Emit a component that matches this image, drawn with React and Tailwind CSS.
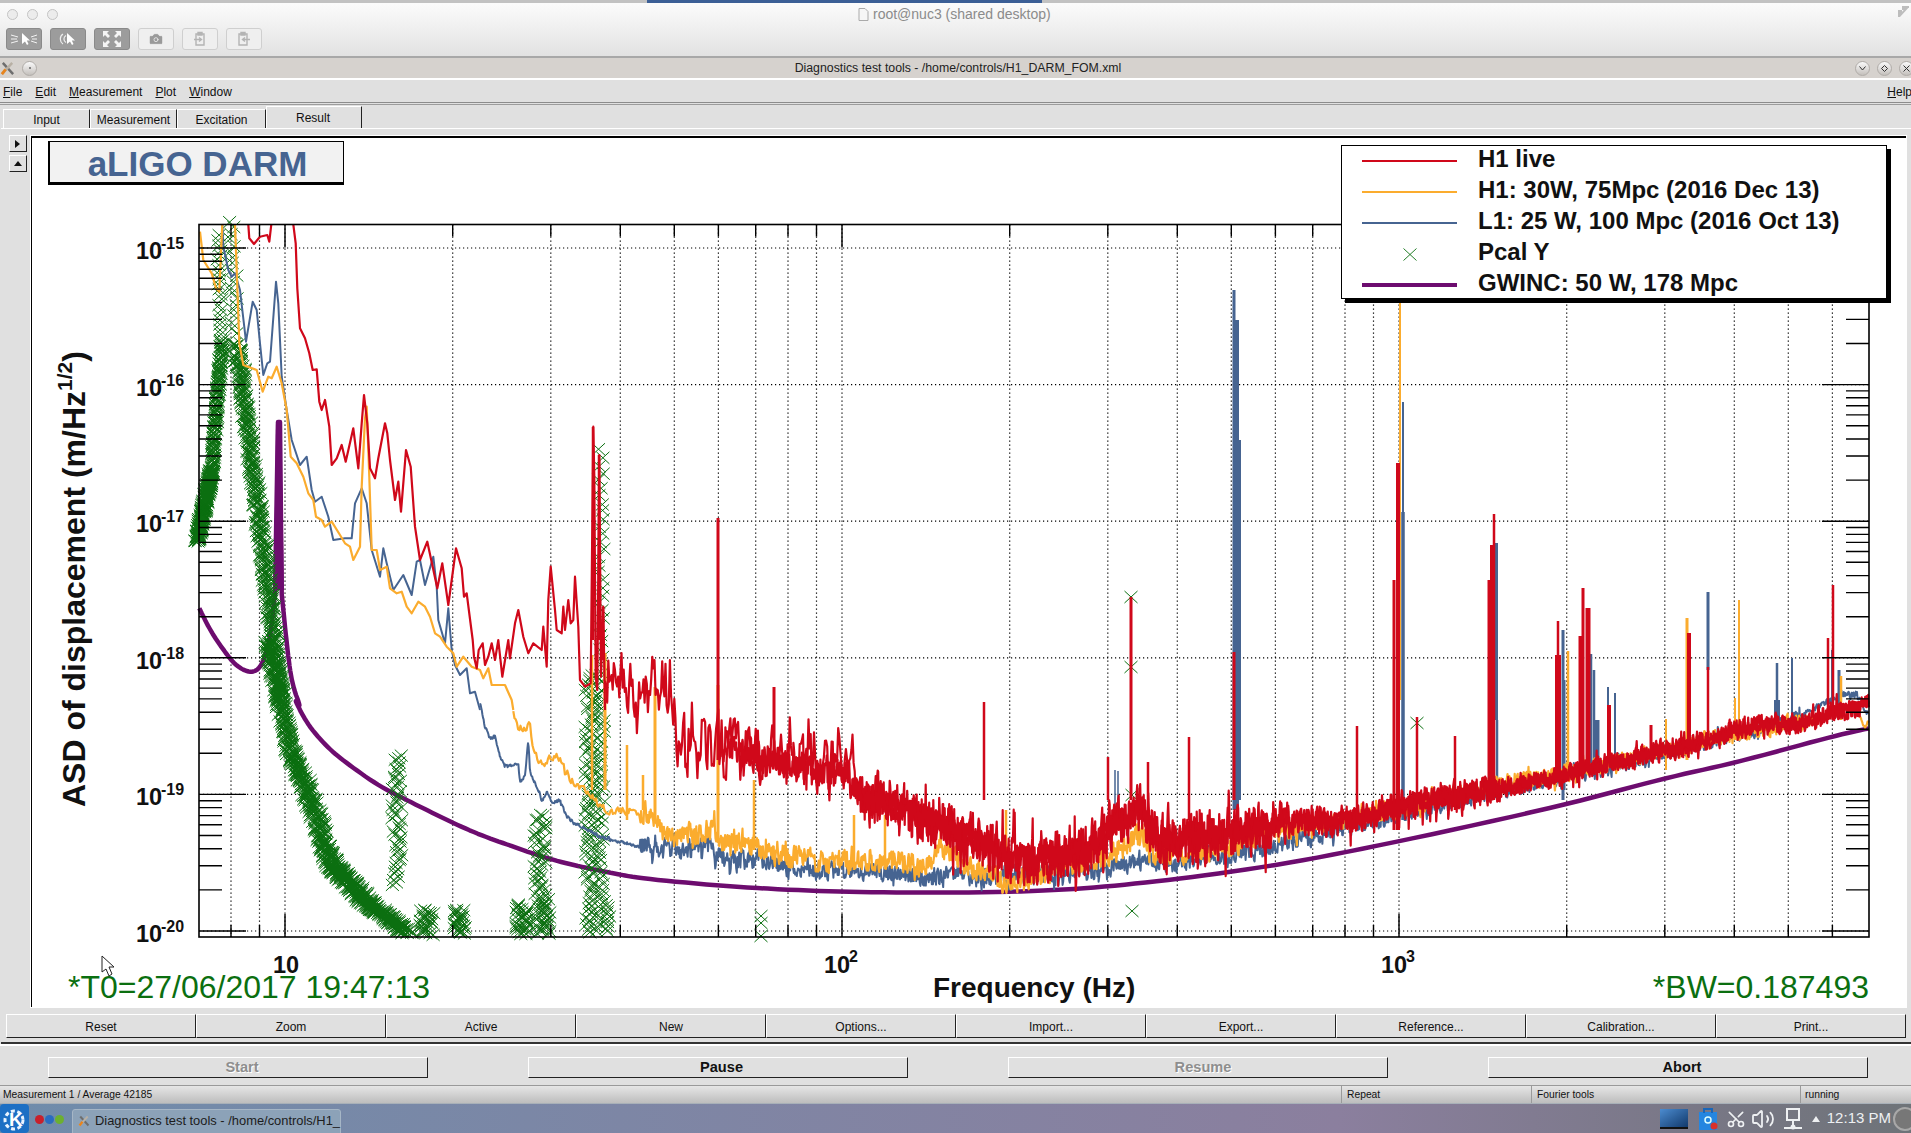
import React from 'react';
import { Scissors, Volume2, Camera } from 'lucide-react';

// ---- chart geometry (page pixels) ----
const PL = 199, PR = 1869, PT = 224.5, PB = 937;
const xOf = (f) => 285 + 557 * (Math.log10(f) - 1);
const yOf = (e) => 248 + 136.6 * (e - 15);

const z5 = (a) => a.map(([x, y]) => [180 + x / 3, 210 + y / 3]);
const z6 = (a) => a.map(([x, y]) => [180 + x / 3, 640 + y / 3]);
const z7 = (a) => a.map(([x, y]) => [640 + x / 2.45, 640 + y / 3]);
const z8 = (a) => a.map(([x, y]) => [1270 + x / 2.45, 480 + y / 3]);

function makeRng(seed) {
  let s = seed;
  return () => {
    s = (s + 0x6d2b79f5) | 0;
    let t = Math.imul(s ^ (s >>> 15), 1 | s);
    t = (t + Math.imul(t ^ (t >>> 7), 61 | t)) ^ t;
    return ((t ^ (t >>> 14)) >>> 0) / 4294967296;
  };
}

const toPath = (pts) => 'M' + pts.map(([x, y]) => x.toFixed(1) + ' ' + y.toFixed(1)).join('L');

// corner cutting, keeps the end points
function smooth(pts, rounds = 3) {
  let cur = pts;
  for (let r = 0; r < rounds; r++) {
    const next = [cur[0]];
    for (let i = 0; i < cur.length - 1; i++) {
      const [a, b] = cur[i], [c, d] = cur[i + 1];
      next.push([a * 0.75 + c * 0.25, b * 0.75 + d * 0.25], [a * 0.25 + c * 0.75, b * 0.25 + d * 0.75]);
    }
    next.push(cur[cur.length - 1]);
    cur = next;
  }
  return cur;
}

function noisy(ctrl, ampOf, stepOf, seed, keep = 0.25) {
  const rng = makeRng(seed);
  const out = [];
  let i = 0, x = ctrl[0][0], walk = 0;
  const end = ctrl[ctrl.length - 1][0];
  while (x < end) {
    while (ctrl[i + 1][0] < x) i++;
    const [x0, y0] = ctrl[i], [x1, y1] = ctrl[i + 1];
    const c = y0 + ((y1 - y0) * (x - x0)) / (x1 - x0 || 1);
    const a = ampOf(x);
    let v = (rng() - 0.5) * 2 * a;
    if (rng() < 0.07) v *= 1.7;
    walk = keep * walk + v;
    out.push([x, c + walk]);
    x += stepOf(x);
  }
  return out;
}

const spikes = (list) => list.map(([x, top, bottom, w]) => (
  `M${x - w / 2} ${bottom}L${x - w / 2} ${top}L${x + w / 2} ${top}L${x + w / 2} ${bottom}Z`
)).join('');

// ---- traces ----
const redLow1 = z5([[205,43],[208,85],[222,102],[240,80],[262,75],[268,95],[274,43]]);
const redLow2 = z5([[340,43],[347,100],[352,235],[360,355],[375,385],[388,430],[398,480],[410,478],[418,575],[425,600],[435,570],[448,650],[455,765],[470,745],[485,705],[497,755],[520,655],[535,775],[545,640],[552,555],[562,640],[570,775],[585,805],[595,745],[615,640],[622,670],[630,750],[645,870],[655,815],[663,905],[678,720],[692,770],[705,950],[720,1050],[742,995],[757,1065],[772,1135],[787,1060],[805,1185],[828,1015],[845,1075],[852,1160],[860,1150],[878,1290],[882,1340],[890,1375],[896,1320],[908,1300],[915,1365],[925,1340],[935,1300],[945,1350],[955,1290],[967,1400],[985,1290],[990,1345],[1005,1240],[1015,1200],[1030,1280],[1045,1330],[1060,1300],[1085,1320],[1090,1250],[1100,1370],[1105,1170],[1112,1070],[1125,1200],[1130,1260],[1145,1270],[1150,1190],[1155,1260],[1165,1170],[1172,1240],[1180,1230],[1185,1100],[1195,1250],[1200,1410],[1215,1430],[1232,1420],[1240,650],[1243,800],[1247,1400],[1252,1440],[1258,735],[1263,1400],[1270,1190],[1275,1500]]);
const redCtrl = [[605,680],[625,680],[640,710],[650,690],[670,680],[676,735],[690,750],[720,745],[762,757],[803,767],[844,773],[864,800],[905,810],[926,820],[966,833],[1007,857],[1048,857],[1089,850],[1109,827],[1142,810],[1158,840],[1211,837],[1252,830],[1270,823],[1352,820],[1392,807],[1474,793],[1556,777],[1637,757],[1719,737],[1735,728],[1800,723],[1869,703]];
const redBand = noisy(
  redCtrl,
  (x) => (x < 860 ? 30 : x < 1100 ? 24 : x < 1290 ? 24 : x < 1500 ? 14 : 10),
  (x) => (x < 860 ? 1.1 : 0.5),
  11,
);
// denser core of the band, where the reference is nearly solid red
const redCore = noisy(
  redCtrl.filter(([x]) => x >= 720),
  (x) => (x < 860 ? 14 : x < 1290 ? 13 : x < 1500 ? 9 : 6),
  () => 0.45,
  71,
);
const redSpikes = spikes([[593,427,640,2.5],[599,455,640,2.5],[603,607,660,2.5],[718,518,760,3],[774,687,760,3],[984,702,800,2.5],[1108,757,800,2.5],[1148,762,800,2.5],[1189,737,820,2.5],[1131,597,800,3],[1234,652,800,3],[1394,580,830,3],[1398,463,830,4],[1417,717,815,2.5],[1357,726,830,2.5],[1455,736,810,2.5],[1490,580,800,5],[1492,545,800,4],[1494,514,800,2.5],[1558,655,775,6],[1558,621,680,2.5],[1580,636,770,3],[1583,588,770,3],[1588,608,770,5],[1609,705,760,4],[1651,725,760,3],[1689,633,745,4],[1708,667,735,2.5],[1828,638,720,2.5],[1833,585,720,2.5]]);

const orangeLow1 = z5([[60,65],[70,150],[95,190],[108,235],[118,245],[127,43]]);
const orangeLow2 = z5([[165,43],[170,180],[178,400],[190,465],[230,480],[248,545],[265,500],[275,505],[290,470],[305,520],[320,600],[332,740],[350,760],[370,800],[385,850],[400,870],[408,920],[425,930],[435,950],[455,935],[480,975],[495,1000],[510,1010],[520,1050],[540,1010],[545,830],[555,625],[560,590],[568,800],[575,1020],[590,1020],[600,1080],[620,1070],[630,1135],[650,1150],[665,1145],[680,1190],[695,1210],[715,1175],[735,1190],[750,1220],[765,1270],[780,1280],[800,1310],[820,1330],[830,1370],[850,1340],[875,1370],[900,1380],[910,1405],[925,1375],[935,1425],[975,1425],[995,1470],[1000,1500]]);
const orangeBand = noisy(
  [...z6([[1000,230],[1020,265],[1050,255],[1060,320],[1080,370],[1135,350],[1180,430],[1220,460],[1290,520],[1330,510],[1400,520],[1430,550],[1465,600]]),
   ...z7([[100,580],[190,570],[200,610],[280,610],[300,640],[400,650],[525,670],[600,660],[700,680],[740,620],[800,680],[900,730],[1145,650],[1230,580],[1260,650],[1400,630],[1568,570]]),
   ...z8([[200,1020],[500,930],[800,860],[1100,770],[1300,725],[1420,680],[1445,710],[1458,745],[1467,720]])],
  (x) => (x < 640 ? 4 : x < 1300 ? 10 : x < 1810 ? 8 : 1),
  (x) => (x < 640 ? 1.2 : 0.6),
  23,
  0.3,
);
const orangeSpikes = spikes([[592,655,790,2.5],[605,653,790,3],[627,745,820,2.5],[643,775,810,2.5],[655,687,820,3],[718,685,840,3],[754,780,850,2.5],[854,815,870,2.5],[885,815,865,2.5],[1006,810,880,2.5],[1400,280,700,2],[1568,651,775,2.5],[1666,719,770,2],[1735,698,740,2],[1739,600,725,2],[1687,618,760,3],[1841,676,720,2.5]]);

const blueLow = z5([[127,43],[130,110],[145,180],[155,200],[165,190],[180,240],[198,395],[218,275],[230,300],[240,400],[250,495],[262,460],[270,455],[288,215],[295,280],[305,500],[320,600],[335,690],[360,765],[380,740],[395,840],[405,875],[425,860],[445,920],[460,990],[495,985],[515,985],[525,880],[545,835],[560,880],[575,1020],[600,1100],[610,1015],[620,1060],[640,1140],[670,1095],[695,1155],[710,1055],[720,1050],[735,1125],[760,1040],[770,1130],[775,1230],[795,1300],[805,1195],[815,1320],[825,1365],[840,1395],[860,1375],[870,1450],[885,1445],[900,1500]]);
const blueBand = noisy(
  [...z6([[900,190],[915,260],[930,295],[945,290],[960,350],[975,380],[1015,375],[1020,430],[1035,405],[1045,300],[1050,395],[1070,440],[1085,480],[1100,455],[1115,490],[1140,480],[1155,520],[1180,550],[1210,560],[1260,590],[1300,600],[1340,610]]),
   ...z7([[0,620],[100,630],[170,620],[210,660],[300,660],[400,690],[500,690],[600,700],[700,710],[800,710],[900,720],[1000,700],[1100,690],[1200,675],[1300,670],[1450,640],[1568,620]]),
   ...z8([[0,1100],[200,1040],[500,950],[800,870],[1100,780],[1300,710],[1400,640],[1440,645],[1467,710]])],
  (x) => (x < 640 ? 1.5 : x < 1350 ? 9 : x < 1800 ? 7 : 3),
  () => 0.6,
  37,
  0.3,
);
const blueSpikes = spikes([[1234,290,810,3],[1236,320,810,6],[1237,440,800,8],[1403,402,820,2],[1403,512,820,3.5],[1496,543,720,4],[1497,720,790,2.5],[1563,630,800,3],[1564,680,790,3],[1591,654,775,2.5],[1594,670,775,2.5],[1597,720,770,5],[1608,687,770,2],[1615,693,760,2],[1708,592,670,3],[1777,663,725,2.5],[1777,700,725,6],[1792,658,720,2],[1832,650,710,2],[1839,670,715,3],[1115,770,815,1.5],[1118,771,815,1.5]]);

const purpleLeft = smooth(z5([[58,1195],[90,1260],[130,1320],[170,1370],[215,1390],[245,1370],[270,1290],[285,1150]]));
const purpleRight = smooth([
  ...z5([[305,1150],[320,1300],[335,1420],[365,1500]]),
  ...z6([[340,170],[380,250],[440,320],[500,370],[600,440],[700,490],[800,540],[900,585],[1000,620],[1100,655],[1200,680],[1300,700],[1380,715]]),
  ...z7([[200,738],[400,752],[600,758],[900,757],[1100,745],[1300,720],[1568,675]]),
  ...z8([[315,1085],[724,975],[964,895],[1135,850],[1375,770],[1467,745]]),
]);
const purplePts = [...purpleLeft, [278, 422], [280, 422], ...purpleRight];

// green Pcal Y crosses
const crossRuns = [
  [197,541,212,470,240,3],[212,470,222,340,140,2],[222,340,218,230,22,2],
  [232,222,236,340,20,4],[237,343,283,707,420,5],[268,640,290,750,180,5],[290,750,303,780,70,6],[303,780,313,807,60,7],[313,807,323,840,60,7],[323,840,333,867,70,7],[333,867,347,880,80,8],[347,880,367,903,90,9],[367,903,387,917,70,8],[387,917,407,933,70,7],
  [397,755,397,887,50,5],[427,910,427,935,30,7],[460,910,460,935,30,6],[523,905,523,935,36,7],[540,815,540,935,60,6],[545,900,545,935,20,5],[590,675,590,935,90,5],[600,675,600,935,70,5],[608,905,608,935,10,2],[601,450,601,680,30,3],
];
const crossPath = (() => {
  const rng = makeRng(5);
  const one = (x, y) => `M${(x - 6.5).toFixed(1)} ${(y - 6).toFixed(1)}L${(x + 6.5).toFixed(1)} ${(y + 6).toFixed(1)}M${(x - 6.5).toFixed(1)} ${(y + 6).toFixed(1)}L${(x + 6.5).toFixed(1)} ${(y - 6).toFixed(1)}`;
  let d = '';
  crossRuns.forEach(([x0, y0, x1, y1, n, j]) => {
    for (let i = 0; i < n; i++) {
      const t = i / n;
      d += one(x0 + (x1 - x0) * t + (rng() - 0.5) * 2 * j, y0 + (y1 - y0) * t + (rng() - 0.5) * 2);
    }
  });
  [[1131,597],[1131,667],[1132,795],[1132,911],[761,916],[761,923],[761,936],[1417,723]].forEach(([x, y]) => { d += one(x, y); });
  return d;
})();

// ---- grid and ticks ----
const vFreqs = [];
[1, 10, 100, 1000].forEach((m) => [1, 2, 3, 4, 5, 6, 7, 8, 9].forEach((k) => {
  const f = m * k;
  if (xOf(f) > PL + 1 && xOf(f) < PR - 1) vFreqs.push(f);
}));
const decades = [15, 16, 17, 18, 19, 20];

let gridD = '', tickD = '';
vFreqs.forEach((f) => {
  const x = xOf(f).toFixed(1);
  const major = [10, 100, 1000].includes(f);
  const len = major ? 23 : 12;
  gridD += `M${x} ${PT}L${x} ${PB}`;
  tickD += `M${x} ${PB}L${x} ${PB - len}M${x} ${PT}L${x} ${PT + len}`;
});
decades.forEach((e) => {
  const y = yOf(e).toFixed(1);
  gridD += `M${PL} ${y}L${PR} ${y}`;
  tickD += `M${PL} ${y}L${PL + 47} ${y}M${PR} ${y}L${PR - 47} ${y}`;
  if (e < 20) {
    [9, 8, 7, 6, 5, 4, 3, 2].forEach((k) => {
      const yy = (yOf(e) + 136.6 * (1 - Math.log10(k))).toFixed(1);
      tickD += `M${PL} ${yy}L${PL + 23} ${yy}M${PR} ${yy}L${PR - 23} ${yy}`;
    });
  }
});

const Chart = () => (
  <svg viewBox="32 138 1874 869" className="block w-full h-full">
    <path d={gridD} fill="none" stroke="#000" strokeWidth="1.2" strokeDasharray="1.2 2.8" />
    <path d={toPath(purplePts)} fill="none" stroke="#6d0c6f" strokeWidth="4.5" strokeLinejoin="round" />
    <path d="M276 422L281 422L284 590L274 590Z" fill="#6d0c6f" />
    <path d={crossPath} fill="none" stroke="#0b6f10" strokeWidth="1" />
    <g fill="none" stroke="#466491" strokeWidth="2" strokeLinejoin="round">
      <path d={toPath(blueLow)} />
      <path d={toPath(blueBand)} />
    </g>
    <path d={blueSpikes} fill="#466491" />
    <g fill="none" stroke="#fbac2e" strokeWidth="2.2" strokeLinejoin="round">
      <path d={toPath(orangeLow1)} />
      <path d={toPath(orangeLow2)} />
      <path d={toPath(orangeBand)} />
    </g>
    <path d={orangeSpikes} fill="#fbac2e" />
    <g fill="none" stroke="#d0081a" strokeWidth="2.2" strokeLinejoin="round">
      <path d={toPath(redLow1)} />
      <path d={toPath(redLow2)} />
      <path d={toPath(redBand)} />
      <path d={toPath(redCore)} />
    </g>
    <path d={redSpikes} fill="#d0081a" />
    <path d={tickD} fill="none" stroke="#000" strokeWidth="1.4" />
    <rect x={PL} y={PT} width={PR - PL} height={PB - PT} fill="none" stroke="#000" strokeWidth="1.6" />

    <g className="font-['Liberation_Sans',sans-serif]" fontWeight="700" fill="#111">
      {decades.map((e) => (
        <g key={e}>
          <text x="136" y={yOf(e) + 11} fontSize="23.5">10</text>
          <text x="161" y={yOf(e) + 1} fontSize="16">-{e}</text>
        </g>
      ))}
      <text x="273" y="973" fontSize="23.5">10</text>
      <text x="824" y="973" fontSize="23.5">10</text>
      <text x="849" y="962" fontSize="16">2</text>
      <text x="1381" y="973" fontSize="23.5">10</text>
      <text x="1406" y="962" fontSize="16">3</text>
      <text x="933" y="997" fontSize="28">Frequency (Hz)</text>
      <text transform="rotate(-90 85 807)" x="85" y="807" fontSize="32">
        ASD of displacement (m/Hz<tspan fontSize="21" dy="-13">1/2</tspan><tspan dy="13">)</tspan>
      </text>
    </g>
    <g className="font-['Liberation_Sans',sans-serif]" fill="#0b6f10" fontSize="32">
      <text x="68" y="998">*T0=27/06/2017 19:47:13</text>
      <text x="1869" y="998" textAnchor="end">*BW=0.187493</text>
    </g>
    {/* mouse pointer */}
    <path d="M102 956L102 972L106 969L109 976L112 974L109 967L114 967Z" fill="#fff" stroke="#222" strokeWidth="1" />
  </svg>
);

const legendRows = [
  { label: 'H1 live', line: 'h-[2px] bg-[#d0081a]' },
  { label: 'H1: 30W, 75Mpc (2016 Dec 13)', line: 'h-[2px] bg-[#fbac2e]' },
  { label: 'L1: 25 W, 100 Mpc (2016 Oct 13)', line: 'h-[2px] bg-[#466491]' },
  { label: 'Pcal Y', cross: true },
  { label: 'GWINC: 50 W, 178 Mpc', line: 'h-1 bg-[#6d0c6f]' },
];

const Legend = () => (
  <div className="absolute left-[1309px] top-[7px] w-[546px] h-[154px] bg-white border border-black shadow-[4px_4px_0_#000] flex flex-col">
    <div className="-mt-[2px]">
      {legendRows.map((r) => (
        <div key={r.label} className="flex items-center h-[31px] pl-5">
          <div className="w-[95px] flex items-center justify-center pt-[3px]">
            {r.cross ? (
              <svg width="14" height="13" viewBox="0 0 14 13"><path d="M.5.5L13.5 12.5M.5 12.5L13.5.5" stroke="#0b6f10" strokeWidth="0.9" /></svg>
            ) : (
              <div className={'w-full ' + r.line} />
            )}
          </div>
          <span className="ml-[21px] text-[24px] leading-none font-bold text-[#111] pb-[2px] whitespace-nowrap">{r.label}</span>
        </div>
      ))}
    </div>
  </div>
);

const raised = 'bg-[#e0e0e0] border-t border-l border-white border-r border-b border-r-[#222] border-b-[#222]';

const tabs = [
  { label: 'Input', w: 'w-[87px]' },
  { label: 'Measurement', w: 'w-[87px]' },
  { label: 'Excitation', w: 'w-[89px]' },
];

const actions = ['Reset', 'Zoom', 'Active', 'New', 'Options...', 'Import...', 'Export...', 'Reference...', 'Calibration...', 'Print...'];

const ToolButton = ({ active, children }) => (
  <div className={'w-9 h-[22px] rounded-[3px] border flex items-center justify-center ' + (active ? 'bg-[#9c9c9c] border-[#8a8a8a] text-white' : 'border-[#cfcfcf] bg-[#efefef] text-[#a8a8a8]')}>
    {children}
  </div>
);

const WmDot = ({ children }) => (
  <div className="w-[15px] h-[15px] rounded-full bg-linear-to-b from-[#fafafa] to-[#c4c0bc] border border-[#b0aca8] flex items-center justify-center">
    {children}
  </div>
);

const XIcon = ({ size = 16 }) => (
  <svg width={size} height={size} viewBox="0 0 16 16">
    <path d="M3 2L14 14" stroke="#6e6e6e" strokeWidth="2.6" />
    <path d="M2 14L13 2" stroke="#b8b0a4" strokeWidth="2.6" />
    <path d="M2 14L6 9" stroke="#e8841c" strokeWidth="3" />
  </svg>
);

const KIcon = () => (
  <svg width="29" height="29" viewBox="0 0 29 29">
    <rect width="29" height="29" rx="4" fill="#1c6fc4" />
    <g fill="none" stroke="#e8f3ff" strokeWidth="3">
      <circle cx="14" cy="16" r="9" strokeDasharray="4 2.5" />
    </g>
    <text x="9" y="22" fontSize="19" fontWeight="700" fill="#fff">K</text>
  </svg>
);

export default function App() {
  return (
    <div className="w-[1911px] h-[1133px] overflow-hidden flex flex-col bg-[#e0e0e0] text-[#111] font-['Liberation_Sans',sans-serif]">
      {/* VNC viewer chrome */}
      <div className="h-[58px] shrink-0 flex flex-col border-b-2 border-[#a8a8a8] bg-linear-to-b from-[#fdfdfd] to-[#e2e2e2]">
        <div className="h-[3px] shrink-0 bg-[#c2c2c2] flex">
          <div className="ml-[647px] w-[395px] bg-[#3c5f96]" />
        </div>
        <div className="h-[22px] shrink-0 flex items-center pl-[7px] pr-[1px]">
          <div className="flex gap-[9px] w-[690px]">
            <div className="w-[11px] h-[11px] rounded-full border border-[#c4c4c4] bg-[#ececec]" />
            <div className="w-[11px] h-[11px] rounded-full border border-[#c4c4c4] bg-[#ececec]" />
            <div className="w-[11px] h-[11px] rounded-full border border-[#c4c4c4] bg-[#ececec]" />
          </div>
          <div className="flex items-center gap-1 ml-[161px] text-[14px] text-[#8b8b8b]">
            <svg width="11" height="13" viewBox="0 0 11 13"><path d="M1 .5H7L10 3.5V12.5H1Z" fill="#f6f6f6" stroke="#aaa" /></svg>
            root@nuc3 (shared desktop)
          </div>
          <svg className="ml-auto -mt-[6px]" width="12" height="14" viewBox="0 0 12 14">
            <path d="M1 13V7H3V10.5L8 5H5V3H11" fill="none" stroke="#bdbdbd" strokeWidth="2" />
          </svg>
        </div>
        <div className="flex gap-2 pl-[6px] pt-[3px]">
          <ToolButton active>
            <svg width="28" height="16" viewBox="0 0 28 16">
              <path d="M12 2V13L15 10.5L17 14L18.5 13L16.8 9.5L20 9.5Z" fill="#fff" />
              <path d="M1 4L8 6M1 12L8 10M1 8H7M21 6L27 4M21 10L27 12M22 8H27" stroke="#f3f3f3" strokeWidth="1" />
            </svg>
          </ToolButton>
          <ToolButton active>
            <svg width="26" height="16" viewBox="0 0 26 16">
              <path d="M8 3A6 6 0 0 0 8 13M11 4.5A4 4 0 0 0 11 11.5" fill="none" stroke="#eee" strokeWidth="1.2" />
              <path d="M12 2V13L15 10.5L17 14L18.5 13L16.8 9.5L20 9.5Z" fill="#fff" />
            </svg>
          </ToolButton>
          <ToolButton active>
            <svg width="20" height="18" viewBox="0 0 20 18" fill="#f4f4f4">
              <path d="M1 1H7L5 3L8 6L6 8L3 5L1 7ZM19 1H13L15 3L12 6L14 8L17 5L19 7ZM1 17H7L5 15L8 12L6 10L3 13L1 11ZM19 17H13L15 15L12 12L14 10L17 13L19 11Z" />
            </svg>
          </ToolButton>
          <ToolButton>
            <Camera size={16} fill="#9a9a9a" stroke="#f0f0f0" strokeWidth={1.2} />
          </ToolButton>
          <ToolButton>
            <svg width="16" height="16" viewBox="0 0 16 16" fill="none" stroke="#b4b4b4" strokeWidth="1.4">
              <path d="M4 3H12V14H4ZM6 1.5H10V4H6ZM2 8.5H9M7 6.5L9.5 8.5L7 10.5" />
            </svg>
          </ToolButton>
          <ToolButton>
            <svg width="16" height="16" viewBox="0 0 16 16" fill="none" stroke="#b4b4b4" strokeWidth="1.4">
              <path d="M3 3H11V14H3ZM5 1.5H9V4H5ZM14 8.5H7M9 6.5L6.5 8.5L9 10.5" />
            </svg>
          </ToolButton>
        </div>
      </div>

      {/* window title */}
      <div className="h-5 shrink-0 bg-[#d6d2ce] flex items-center relative">
        <div className="flex items-center gap-[7px] pl-0">
          <XIcon size={15} />
          <WmDot><div className="w-[2px] h-[2px] bg-[#666] rounded-full" /></WmDot>
        </div>
        <div className="flex-1 text-center text-[12.3px] text-[#222] pl-[24px]">Diagnostics test tools - /home/controls/H1_DARM_FOM.xml</div>
        <div className="flex gap-[7px] -mr-[3px]">
          <WmDot><svg width="7" height="5" viewBox="0 0 7 5"><path d="M.5.5L3.5 4L6.5.5" fill="none" stroke="#333" /></svg></WmDot>
          <WmDot><svg width="7" height="7" viewBox="0 0 7 7"><path d="M3.5.5L6.5 3.5L3.5 6.5L.5 3.5Z" fill="none" stroke="#333" /></svg></WmDot>
          <WmDot><svg width="7" height="7" viewBox="0 0 7 7"><path d="M.5.5L6.5 6.5M6.5.5L.5 6.5" stroke="#333" /></svg></WmDot>
        </div>
      </div>
      <div className="h-[2px] shrink-0 bg-white" />

      {/* menu bar */}
      <div className="h-[22px] shrink-0 flex items-center justify-between pl-[3px] text-[12px] pt-[1px]">
        <div className="flex gap-[13px]">
          <span><u>F</u>ile</span>
          <span><u>E</u>dit</span>
          <span><u>M</u>easurement</span>
          <span><u>P</u>lot</span>
          <span><u>W</u>indow</span>
        </div>
        <span className="-mr-[1px]"><u>H</u>elp</span>
      </div>
      <div className="h-[1px] shrink-0 bg-[#8c8c8c]" />
      <div className="h-[1px] shrink-0 bg-[#e0e0e0]" />
      <div className="h-[1px] shrink-0 bg-[#9c9c9c]" />

      {/* tabs */}
      <div className="h-[23px] shrink-0 flex items-end pl-[3px] text-[12px]">
        {tabs.map((t) => (
          <div key={t.label} className={t.w + ' h-[19px] border-t border-l border-white border-r border-r-[#222] flex items-center justify-center pt-[1px]'}>
            {t.label}
          </div>
        ))}
        <div className="w-[96px] h-[22px] border-t border-l border-white border-r border-r-[#222] flex items-center justify-center pr-[2px]">Result</div>
      </div>

      {/* tab frame */}
      <div className="flex-1 flex flex-col border-t border-white ml-[1px]">
        <div className="flex pt-[7px]">
          <div className="w-[30px] shrink-0 flex flex-col items-center gap-[3px] pl-[3px] -mt-[1px]">
            <div className={raised + ' w-[18px] h-[17px] flex items-center justify-center'}>
              <svg width="5" height="8" viewBox="0 0 5 8"><path d="M0 0L5 4L0 8Z" fill="#111" /></svg>
            </div>
            <div className={raised + ' w-[18px] h-[17px] flex items-center justify-center'}>
              <svg width="8" height="5" viewBox="0 0 8 5"><path d="M0 5L4 0L8 5Z" fill="#111" /></svg>
            </div>
          </div>
          <div className="relative w-[1875px] h-[871px] bg-white border-t-2 border-l border-black outline outline-1 outline-white">
            <Chart />
            <div className="absolute left-[16px] top-[3px] w-[296px] h-[44px] bg-[#f2f2f2] border border-black border-l-2 border-b-[3px] flex items-center justify-center text-[35px] leading-none font-bold text-[#466491] pl-[2px] pt-[2px]">
              aLIGO DARM
            </div>
            <Legend />
          </div>
        </div>

        <div className="flex pl-[5px] pt-[7px] h-[31px] shrink-0 text-[12px]">
          {actions.map((a) => (
            <div key={a} className={raised + ' w-[190px] h-[24px] flex items-center justify-center pt-[1px]'}>{a}</div>
          ))}
        </div>
        <div className="mt-auto h-[2px] shrink-0 bg-[#333]" />
      </div>
      <div className="h-[2px] shrink-0 bg-white" />

      {/* start / pause row */}
      <div className="h-[39px] shrink-0 flex items-start pt-[11px] pl-[48px] gap-[100px] text-[14.6px] font-bold">
        <div className={raised + " w-[380px] h-[21px] flex items-center justify-center pl-[8px] text-[#8e8e8e] [text-shadow:1px_1px_0_#fff]"}>Start</div>
        <div className={raised + ' w-[380px] h-[21px] flex items-center justify-center pl-[7px]'}>Pause</div>
        <div className={raised + " w-[380px] h-[21px] flex items-center justify-center pl-[10px] text-[#8e8e8e] [text-shadow:1px_1px_0_#fff]"}>Resume</div>
        <div className={raised + ' w-[380px] h-[21px] flex items-center justify-center pl-[8px]'}>Abort</div>
      </div>

      {/* status bar */}
      <div className="h-[18px] shrink-0 flex border-t border-[#9a9a9a] bg-linear-to-b from-[#e6e6e6] to-[#bdbdbd] text-[10.3px]">
        <div className="w-[1342px] pl-[3px] flex items-center border-r border-[#9a9a9a]">Measurement 1 / Average 42185</div>
        <div className="w-[190px] pl-[5px] flex items-center border-r border-[#9a9a9a]">Repeat</div>
        <div className="w-[269px] pl-[5px] flex items-center border-r border-[#9a9a9a]">Fourier tools</div>
        <div className="flex-1 pl-[4px] flex items-center">running</div>
      </div>

      {/* desktop task bar */}
      <div className="h-[30px] shrink-0 flex items-center bg-linear-to-r from-[#6f8cab] via-[#8b7f9e] via-70% to-[#6e7378] border-t border-[#a8b0b8] relative">
        <KIcon />
        <div className="flex gap-[1px] ml-[6px] mt-[2px]">
          <div className="w-[9px] h-[9px] rounded-full bg-[#c8202c]" />
          <div className="w-[9px] h-[9px] rounded-full bg-[#2a6cc0]" />
          <div className="w-[9px] h-[9px] rounded-full bg-[#6cb030]" />
        </div>
        <div className="ml-[8px] mt-[5px] w-[269px] h-[25px] rounded-t-[3px] bg-[#8ca2b8] border border-[#a6b6c6] flex items-center gap-[5px] pl-[5px] text-[12.9px] text-[#1c1c1c]">
          <XIcon size={16} />
          <span className="whitespace-nowrap">Diagnostics test tools - /home/controls/H1_</span>
        </div>
        <div className="ml-auto flex items-center text-[#eef0f2]">
          <div className="w-[28px] h-[20px] bg-linear-to-br from-[#4c8cd0] to-[#123a6c] border-b-2 border-[#111]" />
          <svg className="ml-[10px]" width="20" height="23" viewBox="0 0 20 23">
            <path d="M1 5H19V23H1Z" fill="#2586e0" /><path d="M6 6V2H14V6" fill="none" stroke="#1a66b8" strokeWidth="2" />
            <circle cx="10" cy="13" r="3" fill="none" stroke="#dff" strokeWidth="1.5" /><circle cx="16" cy="19" r="3.5" fill="#d8322c" />
          </svg>
          <Scissors className="ml-[8px] -rotate-90" size={20} strokeWidth={2} />
          <Volume2 className="ml-[5px]" size={24} strokeWidth={1.8} />
          <svg className="ml-[6px]" width="24" height="24" viewBox="0 0 24 24" fill="none" stroke="#eef0f2" strokeWidth="2">
            <path d="M6 2H18V13H6ZM12 13V20M3 21H21" /><circle cx="12" cy="20" r="1.5" fill="#eef0f2" />
          </svg>
          <svg className="ml-[7px]" width="8" height="6" viewBox="0 0 8 6"><path d="M0 6L4 0L8 6Z" fill="#eef0f2" /></svg>
          <span className="ml-[7px] text-[15px] whitespace-nowrap">12:13 PM</span>
          <div className="ml-[2px] -mr-[6px] w-[24px] h-[24px] rounded-full border-2 border-[#a8a8a8] bg-[#777]" />
        </div>
      </div>
    </div>
  );
}
